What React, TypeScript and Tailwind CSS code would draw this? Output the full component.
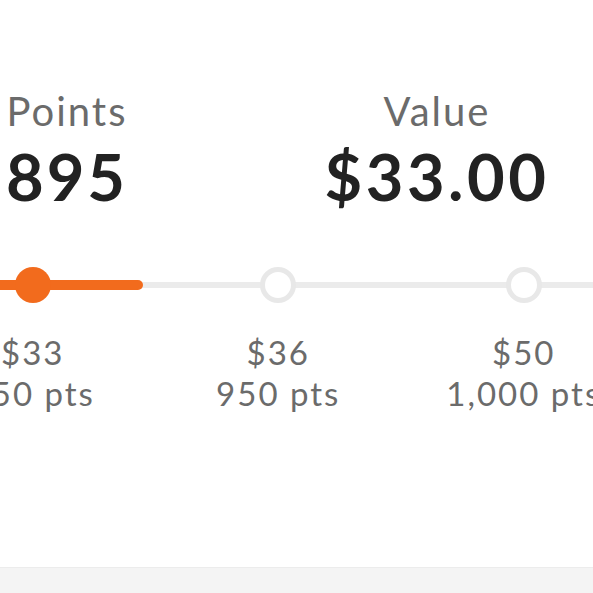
import React from "react";

const tiers = [
  { value: "$33", pts: "850 pts", active: true },
  { value: "$36", pts: "950 pts", active: false },
  { value: "$50", pts: "1,000 pts", active: false },
  { value: "$75", pts: "1,500 pts", active: false },
];

const App: React.FC = () => {
  return (
    <div
      className="w-[593px] h-[593px] overflow-hidden bg-white flex flex-col"
      style={{ fontFamily: "Lato, 'Noto Sans', sans-serif" }}
    >
      {/* summary */}
      <div className="flex -ml-[118px] pt-[91px] shrink-0">
        <div className="w-[370px] shrink-0 flex flex-col items-center">
          <p className="text-[40px] leading-[40px] tracking-[2px] text-[#6b6b6b]">Points</p>
          <p className="mt-[13px] text-[65px] leading-[65px] tracking-[3px] font-bold text-[#222222]">
            895
          </p>
        </div>
        <div className="w-[370px] shrink-0 flex flex-col items-center">
          <p className="text-[40px] leading-[40px] tracking-[2px] text-[#6b6b6b]">Value</p>
          <p className="mt-[13px] text-[65px] leading-[65px] tracking-[3.5px] font-bold text-[#222222]">
            $33.00
          </p>
        </div>
      </div>

      {/* slider */}
      <div className="relative mt-[58px] h-[36px] shrink-0">
        <div className="absolute left-0 right-0 top-[15px] h-[6px] bg-[#ebebeb]" />
        <div className="absolute -left-[20px] w-[163px] top-[13px] h-[10px] rounded-full bg-[#f26b1d]" />
        <div className="relative flex -ml-[90px]">
          {tiers.map((t) => (
            <div key={t.value} className="w-[245.5px] shrink-0 flex justify-center">
              {t.active ? (
                <div className="w-[36px] h-[36px] rounded-full bg-[#f26b1d]" />
              ) : (
                <div className="w-[36px] h-[36px] rounded-full bg-white border-[5px] border-[#e8e8e8]" />
              )}
            </div>
          ))}
        </div>
      </div>

      {/* labels */}
      <div className="flex -ml-[90px] mt-[29px] shrink-0">
        {tiers.map((t) => (
          <div
            key={t.value}
            className="w-[245.5px] shrink-0 flex flex-col items-center text-[33px] leading-[41px] tracking-[2px] text-[#6b6b6b] whitespace-nowrap"
          >
            <span>{t.value}</span>
            <span>{t.pts}</span>
          </div>
        ))}
      </div>

      <div className="flex-1" />
      <div className="h-[26px] shrink-0 bg-[#f4f4f4] border-t border-[#ececec]" />
    </div>
  );
};

export default App;
